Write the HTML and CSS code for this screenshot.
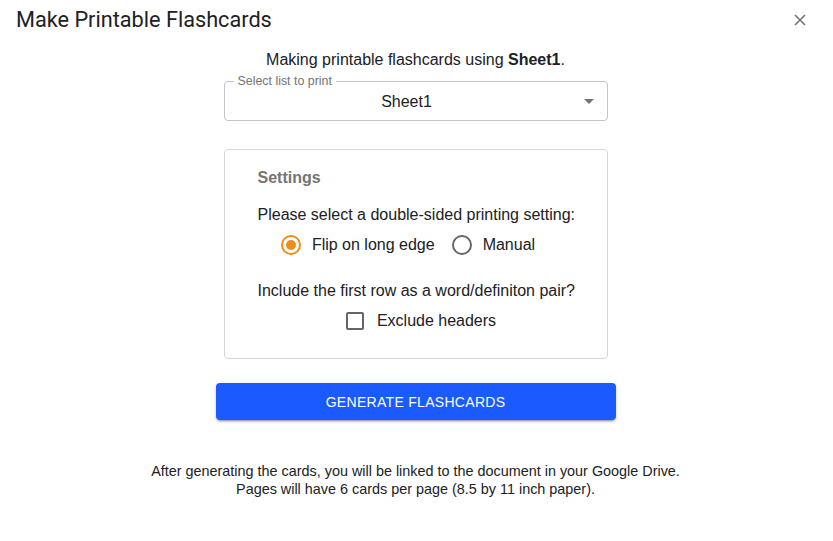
FILE: index.html
```html
<!DOCTYPE html>
<html>
<head>
<meta charset="utf-8">
<link rel="stylesheet" href="styles.css">
</head>
<body>
<div class="dialog">
  <header class="header">
    <h1 class="title">Make Printable Flashcards</h1>
    <button class="close" aria-label="Close">
      <svg width="12" height="12" viewBox="0 0 12 12"><path d="M1 1L11 11M11 1L1 11" stroke="#757575" stroke-width="1.6" fill="none"/></svg>
    </button>
  </header>
  <main class="content">
    <p class="intro">Making printable flashcards using <b>Sheet1</b>.</p>
    <div class="select">
      <span class="select-label">Select list to print</span>
      <span class="select-value">Sheet1</span>
      <span class="select-arrow"></span>
    </div>
    <section class="card">
      <h2 class="card-title">Settings</h2>
      <p class="question">Please select a double-sided printing setting:</p>
      <div class="radio-group">
        <label class="option"><span class="radio checked"><span class="dot"></span></span><span>Flip on long edge</span></label>
        <label class="option last"><span class="radio"></span><span>Manual</span></label>
      </div>
      <p class="question second">Include the first row as a word/definiton pair?</p>
      <div class="check-row">
        <label class="option"><span class="checkbox"></span><span>Exclude headers</span></label>
      </div>
    </section>
    <button class="generate">Generate Flashcards</button>
    <p class="footnote">After generating the cards, you will be linked to the document in your Google Drive.<br>Pages will have 6 cards per page (8.5 by 11 inch paper).</p>
  </main>
</div>
</body>
</html>
```
FILE: styles.css
```css
* { box-sizing: border-box; }
html, body { margin: 0; padding: 0; background: #fff; }
body {
  font-family: "Liberation Sans", Arial, sans-serif;
  color: #202124;
  width: 833px;
  height: 541px;
  overflow: hidden;
}
.header {
  height: 40px;
  padding: 8px 16px 0 16px;
  display: flex;
  justify-content: space-between;
  align-items: flex-start;
}
.title {
  margin: 0;
  font-family: Roboto, "Liberation Sans", sans-serif;
  font-weight: 400;
  font-size: 21.7px;
  line-height: 24px;
  color: #202124;
}
.close {
  border: 0;
  background: none;
  padding: 0;
  margin: 6px 11px 0 0;
  width: 12px;
  height: 12px;
  display: flex;
}
.content {
  display: flex;
  flex-direction: column;
  align-items: center;
  padding-right: 2px;
}
.intro {
  margin: 11px 0 0 0;
  font-size: 16px;
  line-height: 18px;
}
.select {
  position: relative;
  margin-top: 12px;
  width: 384px;
  height: 40px;
  border: 1px solid #c4c4c4;
  border-radius: 4px;
  display: flex;
  align-items: center;
  justify-content: center;
  padding-right: 18px;
  padding-top: 2px;
}
.select-label {
  position: absolute;
  top: -8px;
  left: 9px;
  padding: 0 4px;
  background: #fff;
  font-size: 12.4px;
  line-height: 14px;
  color: #757575;
}
.select-value {
  font-size: 16px;
  line-height: 18px;
}
.select-arrow {
  position: absolute;
  right: 13px;
  top: 17px;
  width: 0;
  height: 0;
  border-left: 5px solid transparent;
  border-right: 5px solid transparent;
  border-top: 5px solid #757575;
}
.card {
  margin-top: 28px;
  width: 384px;
  border: 1px solid #d6d6d6;
  border-radius: 4px;
  padding: 19px 33px 27px 33px;
  display: flex;
  flex-direction: column;
}
.card-title {
  margin: 0;
  font-size: 16px;
  line-height: 18px;
  font-weight: 700;
  color: #757575;
}
.question {
  margin: 19px 0 0 0;
  font-size: 16px;
  line-height: 18px;
  text-align: center;
  white-space: nowrap;
}
.question.second { margin-top: 27px; }
.radio-group {
  margin-top: 11px;
  display: flex;
  justify-content: center;
  gap: 17px;
  padding-right: 15px;
}
.option {
  display: flex;
  align-items: center;
  gap: 11px;
  font-size: 16px;
  line-height: 20px;
  color: #202124;
}
.radio {
  width: 20px;
  height: 20px;
  border: 2px solid #666;
  border-radius: 50%;
  display: flex;
  align-items: center;
  justify-content: center;
}
.radio.checked { border-color: #f08c1a; }
.dot {
  width: 10px;
  height: 10px;
  border-radius: 50%;
  background: #f08c1a;
}
.check-row {
  margin-top: 11px;
  display: flex;
  justify-content: center;
  padding-left: 11px;
}
.check-row .option { gap: 13px; }
.checkbox {
  width: 18px;
  height: 18px;
  border: 2px solid #666;
  border-radius: 2px;
}
.generate {
  margin-top: 24px;
  width: 400px;
  height: 37px;
  border: 0;
  border-radius: 4px;
  background: #1a5aff;
  color: #fff;
  font-family: "Liberation Sans", Arial, sans-serif;
  font-size: 14px;
  letter-spacing: 0.3px;
  text-transform: uppercase;
  box-shadow: 0 3px 1px -2px rgba(0,0,0,0.2), 0 2px 2px 0 rgba(0,0,0,0.14), 0 1px 5px 0 rgba(0,0,0,0.12);
}
.footnote {
  margin: 42px 0 0 0;
  font-size: 14.4px;
  line-height: 18px;
  text-align: center;
}
```
